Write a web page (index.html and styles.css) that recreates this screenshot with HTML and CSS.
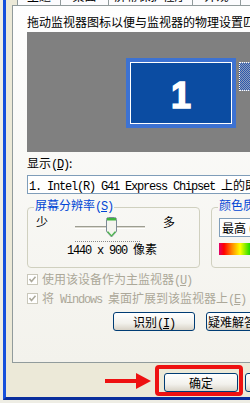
FILE: index.html
```html
<!DOCTYPE html>
<html lang="zh-CN">
<head>
<meta charset="utf-8">
<title>显示 属性</title>
<link rel="stylesheet" href="styles.css">
</head>
<body>
<div class="window">
  <div class="tabs">
    <div class="tab t1"><span>主题</span></div>
    <div class="tab t2"><span>桌面</span></div>
    <div class="tab t3"><span>屏幕保护程序</span></div>
    <div class="tab t4"><span>外观</span></div>
    <div class="tab t5"><span>设置</span></div>
  </div>
  <div class="panel">
    <p class="intro">拖动监视器图标以便与监视器的物理设置匹配。</p>
    <div class="desktop">
      <div class="monitor primary"><span>1</span></div>
      <div class="monitor secondary"></div>
    </div>
    <p class="label">显示<span class="key">(<u>D</u>)</span>:</p>
    <div class="combo wide"><span class="mono">1. Intel(R) G41 Express Chipset </span>上的即插即用监视器</div>
    <div class="groups">
      <fieldset class="group res">
        <legend>屏幕分辨率<span class="key">(<u>S</u>)</span></legend>
        <div class="res-row">
          <span class="end">少</span>
          <div class="slider">
            <div class="track"></div>
            <svg class="thumb" width="11" height="21" viewBox="0 0 11 21">
              <path d="M0.5 2.5 Q0.5 0.5 2.5 0.5 H8.5 Q10.5 0.5 10.5 2.5 V14.5 L5.5 20 L0.5 14.5 Z" fill="#F4F4EF" stroke="#7C8A96"/>
              <rect x="1" y="1" width="9" height="2.5" fill="#3FB33F"/>
              <path d="M1.5 14.5 L5.5 18.8 L9.5 14.5" fill="none" stroke="#4CB84C" stroke-width="1.2"/>
            </svg>
          </div>
          <span class="end more">多</span>
        </div>
        <div class="ticks"></div>
        <p class="res-value"><span class="mono">1440 x 900 </span>像素</p>
      </fieldset>
      <fieldset class="group color">
        <legend>颜色质量<span class="key">(<u>C</u>)</span></legend>
        <div class="combo small">最高 (32 位)</div>
        <div class="spectrum"></div>
      </fieldset>
    </div>
    <label class="check"><span class="box"><svg width="9" height="9" viewBox="0 0 9 9"><path d="M1.5 4 L3.5 6.5 L7.5 1.8" fill="none" stroke="#ADAA9C" stroke-width="1.6"/></svg></span><span class="check-text">使用该设备作为主监视器<span class="key">(<u>U</u>)</span></span></label>
    <label class="check"><span class="box"><svg width="9" height="9" viewBox="0 0 9 9"><path d="M1.5 4 L3.5 6.5 L7.5 1.8" fill="none" stroke="#ADAA9C" stroke-width="1.6"/></svg></span><span class="check-text">将<span class="mono"> Windows </span>桌面扩展到该监视器上<span class="key">(<u>E</u>)</span></span></label>
    <div class="actions">
      <button class="btn">识别<span class="key">(<u>I</u>)</span></button>
      <button class="btn trouble">疑难解答<span class="key">(<u>T</u>)...</span></button>
    </div>
  </div>
  <div class="footer">
    <button class="btn ok">确定</button>
    <button class="btn ok">取消</button>
    <div class="highlight"></div>
    <svg class="arrow" width="48" height="18" viewBox="0 0 48 18">
      <rect x="1" y="7" width="33" height="4" fill="#EE1111"/>
      <polygon points="32,1 47,9 32,17" fill="#EE1111"/>
    </svg>
  </div>
</div>
</body>
</html>
```
FILE: styles.css
```css
html, body {
  margin: 0;
  padding: 0;
  width: 250px;
  height: 403px;
  overflow: hidden;
}
body {
  background: #EEEDE4;
  font-family: "Noto Sans CJK SC", "Noto Sans", sans-serif;
  font-size: 12px;
  line-height: 12px;
  color: #000;
}
p { margin: 0; }

.window {
  margin-left: 3px;
  height: 400px;
  box-sizing: border-box;
  border-left: 3px solid #1650DC;
  border-bottom: 3px solid #0A2E9C;
  background: #ECE9D8;
  display: flex;
  flex-direction: column;
}

.tabs {
  display: flex;
  height: 5px;
  padding-left: 11px;
  overflow: hidden;
  flex: none;
}
.tab {
  box-sizing: border-box;
  border-left: 1px solid #919B9C;
  background: #FCFCFE;
  display: flex;
  justify-content: center;
  flex: none;
}
.tab span {
  margin-top: -10px;
  line-height: 12px;
  white-space: nowrap;
}
.t1 { width: 43px; }
.t2 { width: 48px; }
.t3 { width: 84px; }
.t4 { width: 48px; }
.t5 { width: 60px; border-right: 1px solid #919B9C; }

.panel {
  margin-left: 6px;
  width: 300px;
  height: 358px;
  box-sizing: border-box;
  border: 1px solid #919B9C;
  border-right: none;
  padding-left: 14px;
  background: linear-gradient(#FEFEFE, #F3F2EC);
  flex: none;
}
.intro {
  margin-top: 10px;
  white-space: nowrap;
}
.desktop {
  margin-top: 4px;
  height: 120px;
  box-sizing: border-box;
  background: #808080;
  display: flex;
  align-items: flex-start;
  gap: 3px;
  padding: 26px 0 0 99px;
}
.monitor { flex: none; box-sizing: border-box; }
.primary {
  width: 110px;
  height: 70px;
  border: 4px solid #3D72D2;
  background: #0B4CA2;
  box-shadow: inset 0 0 0 1px #FFFFFF;
  display: flex;
  align-items: center;
  justify-content: center;
  padding-top: 6px;
}
.primary span {
  font-family: "Liberation Sans", Arial, sans-serif;
  font-weight: 700;
  font-size: 36px;
  line-height: 36px;
  color: #FFFFFF;
  -webkit-text-stroke: 1.5px #FFFFFF;
}
.secondary {
  width: 30px;
  height: 29px;
  margin-top: 4px;
  border: 1px dotted #FFFFFF;
  background: repeating-conic-gradient(#2A58B0 0 25%, #8E9CB8 0 50%) 0 0 / 2px 2px;
}

.label { margin-top: 5px; }
.key, .mono {
  font-family: "Liberation Mono", "Courier New", monospace;
  letter-spacing: -1.2px;
}
.combo {
  box-sizing: border-box;
  height: 19px;
  border: 1px solid #7F9DB9;
  background: #FFFFFF;
  line-height: 17px;
  padding-left: 1px;
  white-space: nowrap;
  overflow: hidden;
}
.wide {
  margin-top: 4px;
  width: 262px;
}

.groups {
  margin-top: 5px;
  display: flex;
  gap: 11px;
}
.group {
  margin: 0;
  padding: 0 0 10px;
  border: 1px solid #D0D0BF;
  border-radius: 4px;
  min-width: 0;
  box-sizing: border-box;
  flex: none;
}
.group legend {
  margin-left: 6px;
  padding: 0 1px 3px;
  line-height: 12px;
  color: #0046D5;
  white-space: nowrap;
}
.res { width: 173px; }
.color { width: 90px; }

.res-row {
  display: flex;
  height: 24px;
}
.end {
  margin-left: 8px;
  width: 12px;
  flex: none;
}
.end.more { margin-left: 0; }
.slider {
  position: relative;
  width: 115px;
  box-sizing: border-box;
  padding-top: 10px;
  flex: none;
}
.track {
  margin-left: 27px;
  width: 70px;
  height: 3px;
  box-sizing: border-box;
  border-top: 1px solid #9D9D92;
  border-bottom: 1px solid #FFFFFF;
  background: #DCDAD0;
}
.thumb {
  position: absolute;
  left: 58px;
  top: 1px;
}
.ticks {
  margin: 1px 0 0 47px;
  width: 65px;
  border-top: 1px dotted #8A8A8A;
}
.res-value {
  margin: 1px 0 0 39px;
  white-space: nowrap;
}

.small {
  margin: 2px 0 0 7px;
  width: 80px;
  padding-left: 2px;
}
.spectrum {
  margin: 6px 0 0 7px;
  width: 62px;
  height: 12px;
  background: linear-gradient(90deg, #E0006A 0, #FF0000 8%, #FF8000 20%, #FFFF00 34%, #00D800 52%, #00FFFF 64%, #0000FF 80%, #FF00FF 100%);
}

.check {
  display: flex;
  align-items: center;
  height: 13px;
  margin-top: 5px;
  color: #ACA899;
  white-space: nowrap;
}
.check + .check { margin-top: 6px; }
.check-text { white-space: pre; }
.box {
  width: 11px;
  height: 11px;
  box-sizing: border-box;
  border: 1px solid #C9C7BA;
  background: #FFFFFF;
  margin-right: 4px;
  flex: none;
  display: flex;
  align-items: center;
  justify-content: center;
}

.actions {
  margin-top: 7px;
  display: flex;
  gap: 11px;
  padding-left: 86px;
}
.btn {
  font: inherit;
  font-size: 12px;
  line-height: 17px;
  height: 19px;
  width: 82px;
  box-sizing: border-box;
  border: 1px solid #003C74;
  border-radius: 3px;
  background: linear-gradient(#FFFFFF, #F2F1EC 60%, #D8D2C6);
  padding: 0;
  color: #000;
  white-space: nowrap;
  overflow: hidden;
  flex: none;
}
.trouble {
  text-align: left;
  padding-left: 1px;
}

.footer {
  position: relative;
  flex: 1;
  display: flex;
  align-items: flex-start;
  gap: 7px;
  padding: 10px 0 0 158px;
}
.ok { width: 74px; }
.highlight {
  position: absolute;
  left: 149px;
  top: 2px;
  width: 88px;
  height: 31px;
  box-sizing: border-box;
  border: 4px solid #EE1111;
  border-radius: 4px;
}
.arrow {
  position: absolute;
  left: 98px;
  top: 9px;
}
```
